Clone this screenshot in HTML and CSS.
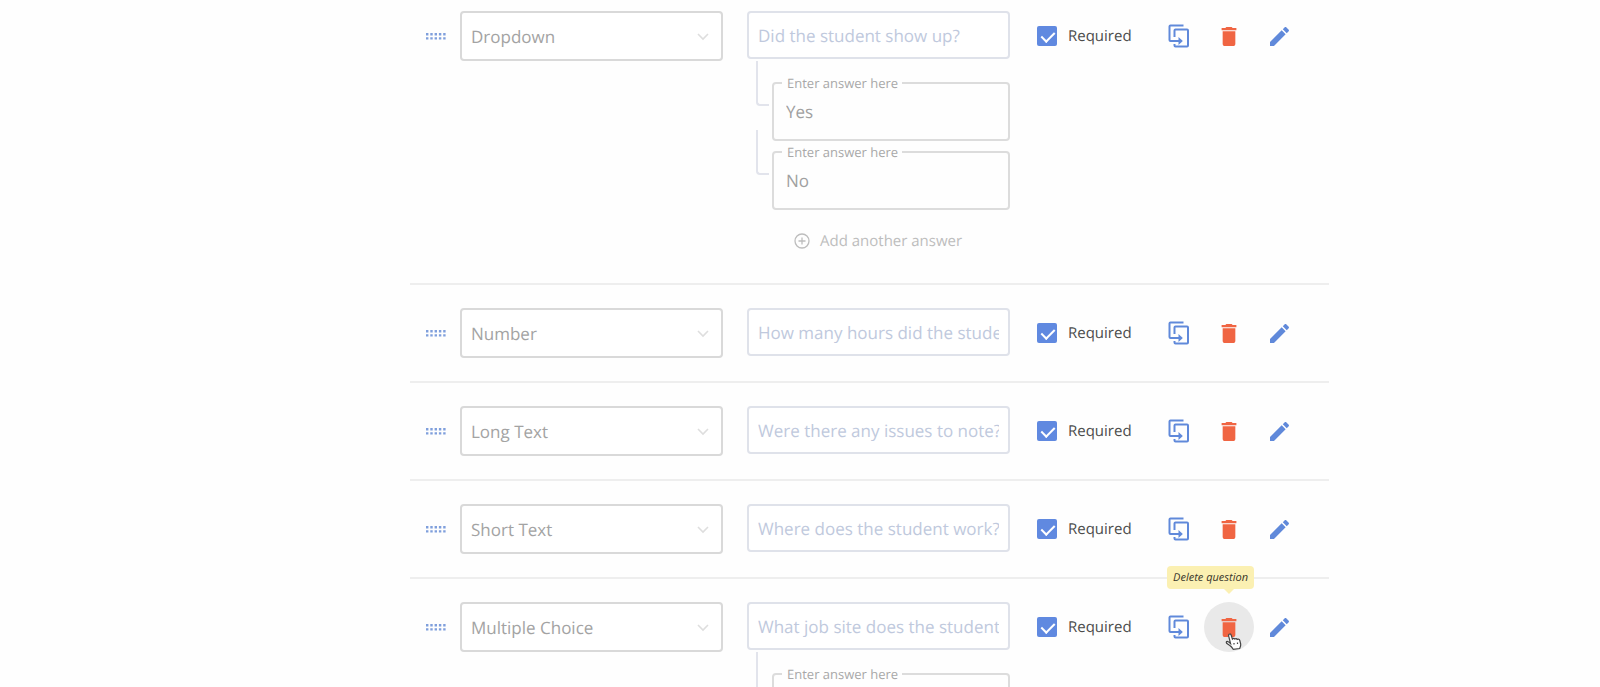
FILE: index.html
```html
<!DOCTYPE html>
<html lang="en">
<head>
    <meta charset="UTF-8">
    <meta name="viewport" content="width=device-width, initial-scale=1.0">
    <title>Form Questions</title>
    <link rel="stylesheet" href="styles.css">
</head>
<body>
    <!-- Shared icons -->
    <svg class="icon-defs" aria-hidden="true">
        <symbol id="icon-drag" viewBox="0 0 20 8">
            <path d="M0 1h2.400v2.400H0zM4.300 1h2.400v2.400H4.300zM8.600 1h2.400v2.400H8.600zM12.900 1h2.400v2.400h-2.400zM17.200 1h2.400v2.400h-2.400zM0 5.200h2.400v2.400H0zM4.300 5.200h2.400v2.400H4.300zM8.600 5.200h2.400v2.400H8.600zM12.900 5.200h2.400v2.400h-2.400zM17.200 5.200h2.400v2.400h-2.400z"/>
        </symbol>
        <symbol id="icon-chevron" viewBox="0 0 12 8">
            <path d="M1 1l5 5 5-5" fill="none" stroke="currentColor" stroke-width="1.6"/>
        </symbol>
        <symbol id="icon-copy" viewBox="0 0 22 24">
            <path d="M15.500 1.500H2.500Q1.500 1.500 1.500 2.500V16Q1.500 17 2.500 17H13M6.500 13V6.500Q6.500 5.500 7.500 5.500H19Q20 5.500 20 6.500V21.500Q20 22.500 19 22.500H7.500Q6.500 22.500 6.500 21.500V20" fill="none" stroke="currentColor" stroke-width="2"/>
            <path d="M10.500 13l4.300 4-4.300 4z"/>
        </symbol>
        <symbol id="icon-trash" viewBox="5 3 14 18">
            <path d="M6 19c0 1.100.9 2 2 2h8c1.100 0 2-.9 2-2V7H6v12zM19 4h-3.500l-1-1h-5l-1 1H5v2h14V4z"/>
        </symbol>
        <symbol id="icon-pencil" viewBox="3 3 18 18">
            <path d="M3 17.250V21h3.750L17.810 9.940l-3.750-3.750L3 17.250zM20.710 7.040c.39-.39.39-1.020 0-1.410l-2.340-2.340c-.39-.39-1.020-.39-1.410 0l-1.830 1.830 3.750 3.750 1.830-1.830z"/>
        </symbol>
        <symbol id="icon-plus" viewBox="0 0 16 16">
            <path d="M8 4.500v7M4.500 8h7" fill="none" stroke="currentColor" stroke-width="1.300"/>
            <circle cx="8" cy="8" r="7" fill="none" stroke="currentColor" stroke-width="1.300"/>
        </symbol>
    </svg>

    <main class="question-list">
        <section class="question">
            <span class="drag-handle"><svg><use href="#icon-drag"/></svg></span>
            <div class="type-field">
                <select class="type-select" aria-label="Question type">
                    <option>Dropdown</option>
                </select>
                <svg class="chevron"><use href="#icon-chevron"/></svg>
            </div>
            <div class="question-body">
                <input type="text" class="question-input" aria-label="Question" placeholder="Did the student show up?">
                <div class="answers">
                    <div class="answer">
                        <span class="connector"></span>
                        <fieldset class="answer-box">
                            <legend><label for="answer1">Enter answer here</label></legend>
                            <input type="text" id="answer1" value="Yes">
                        </fieldset>
                    </div>
                    <div class="answer">
                        <span class="connector"></span>
                        <fieldset class="answer-box">
                            <legend><label for="answer2">Enter answer here</label></legend>
                            <input type="text" id="answer2" value="No">
                        </fieldset>
                    </div>
                </div>
                <button type="button" class="add-answer"><svg><use href="#icon-plus"/></svg>Add another answer</button>
            </div>
            <div class="controls">
                <label class="required"><input type="checkbox" checked>Required</label>
                <div class="actions">
                    <button type="button" class="icon-btn" aria-label="Duplicate question"><svg class="copy"><use href="#icon-copy"/></svg></button>
                    <button type="button" class="icon-btn delete" aria-label="Delete question"><svg class="trash"><use href="#icon-trash"/></svg></button>
                    <button type="button" class="icon-btn" aria-label="Edit question"><svg class="pencil"><use href="#icon-pencil"/></svg></button>
                </div>
            </div>
        </section>

        <section class="question">
            <span class="drag-handle"><svg><use href="#icon-drag"/></svg></span>
            <div class="type-field">
                <select class="type-select" aria-label="Question type">
                    <option>Number</option>
                </select>
                <svg class="chevron"><use href="#icon-chevron"/></svg>
            </div>
            <div class="question-body">
                <input type="text" class="question-input" aria-label="Question" placeholder="How many hours did the student work?">
            </div>
            <div class="controls">
                <label class="required"><input type="checkbox" checked>Required</label>
                <div class="actions">
                    <button type="button" class="icon-btn" aria-label="Duplicate question"><svg class="copy"><use href="#icon-copy"/></svg></button>
                    <button type="button" class="icon-btn delete" aria-label="Delete question"><svg class="trash"><use href="#icon-trash"/></svg></button>
                    <button type="button" class="icon-btn" aria-label="Edit question"><svg class="pencil"><use href="#icon-pencil"/></svg></button>
                </div>
            </div>
        </section>

        <section class="question">
            <span class="drag-handle"><svg><use href="#icon-drag"/></svg></span>
            <div class="type-field">
                <select class="type-select" aria-label="Question type">
                    <option>Long Text</option>
                </select>
                <svg class="chevron"><use href="#icon-chevron"/></svg>
            </div>
            <div class="question-body">
                <input type="text" class="question-input" aria-label="Question" placeholder="Were there any issues to note?">
            </div>
            <div class="controls">
                <label class="required"><input type="checkbox" checked>Required</label>
                <div class="actions">
                    <button type="button" class="icon-btn" aria-label="Duplicate question"><svg class="copy"><use href="#icon-copy"/></svg></button>
                    <button type="button" class="icon-btn delete" aria-label="Delete question"><svg class="trash"><use href="#icon-trash"/></svg></button>
                    <button type="button" class="icon-btn" aria-label="Edit question"><svg class="pencil"><use href="#icon-pencil"/></svg></button>
                </div>
            </div>
        </section>

        <section class="question">
            <span class="drag-handle"><svg><use href="#icon-drag"/></svg></span>
            <div class="type-field">
                <select class="type-select" aria-label="Question type">
                    <option>Short Text</option>
                </select>
                <svg class="chevron"><use href="#icon-chevron"/></svg>
            </div>
            <div class="question-body">
                <input type="text" class="question-input" aria-label="Question" placeholder="Where does the student work?">
            </div>
            <div class="controls">
                <label class="required"><input type="checkbox" checked>Required</label>
                <div class="actions">
                    <button type="button" class="icon-btn" aria-label="Duplicate question"><svg class="copy"><use href="#icon-copy"/></svg></button>
                    <button type="button" class="icon-btn delete" aria-label="Delete question"><svg class="trash"><use href="#icon-trash"/></svg></button>
                    <button type="button" class="icon-btn" aria-label="Edit question"><svg class="pencil"><use href="#icon-pencil"/></svg></button>
                </div>
            </div>
        </section>

        <section class="question">
            <span class="drag-handle"><svg><use href="#icon-drag"/></svg></span>
            <div class="type-field">
                <select class="type-select" aria-label="Question type">
                    <option>Multiple Choice</option>
                </select>
                <svg class="chevron"><use href="#icon-chevron"/></svg>
            </div>
            <div class="question-body">
                <input type="text" class="question-input" aria-label="Question" placeholder="What job site does the student work at?">
                <div class="answers">
                    <div class="answer">
                        <span class="connector"></span>
                        <fieldset class="answer-box">
                            <legend><label for="answer3">Enter answer here</label></legend>
                            <input type="text" id="answer3">
                        </fieldset>
                    </div>
                </div>
            </div>
            <div class="controls">
                <label class="required"><input type="checkbox" checked>Required</label>
                <div class="actions">
                    <button type="button" class="icon-btn" aria-label="Duplicate question"><svg class="copy"><use href="#icon-copy"/></svg></button>
                    <button type="button" class="icon-btn delete active" aria-describedby="deleteTip" aria-label="Delete question">
                        <svg class="trash"><use href="#icon-trash"/></svg>
                        <span class="tooltip" id="deleteTip" role="tooltip">Delete question</span>
                        <svg class="pointer" viewBox="0 0 17 17">
                            <path d="M5.500 10.500L3.700 3.200Q3.300 1.200 4.700 1Q5.800.8 6.300 2.500L7.400 6Q8.500 4.800 9.800 6Q11.200 5 12.200 6.400Q14.200 5.600 14.800 7.500L15.700 11Q16 12.800 14.700 15.500L8.200 16.300Q6.800 13.800 4.500 12.300L1.600 10.300Q.7 8.700 2.300 8.400Q3.600 8.500 5.500 10.500z"/>
                            <path d="M9 10v1.500M12.500 9.500v1.500" fill="none"/>
                        </svg>
                    </button>
                    <button type="button" class="icon-btn" aria-label="Edit question"><svg class="pencil"><use href="#icon-pencil"/></svg></button>
                </div>
            </div>
        </section>
    </main>
</body>
</html>
```
FILE: styles.css
```css
* {
    box-sizing: border-box;
}

body {
    margin: 0;
    height: 100vh;
    overflow: hidden;
    background: #fefefe;
    font-family: "Open Sans", "Noto Sans", sans-serif;
    text-rendering: geometricPrecision;
    color: #4c4c4c;
}

input,
select,
button {
    font-family: inherit;
    text-rendering: inherit;
}

svg {
    display: block;
    fill: currentColor;
}

.icon-defs {
    display: none;
}

.question-list {
    padding: 11px 271px 0 410px;
}

.question {
    display: grid;
    grid-template-columns: 26px 1fr 1fr 295px;
    column-gap: 24px;
    align-items: start;
    padding-bottom: 23px;
    border-bottom: 2px solid #eee;
}

.question + .question {
    padding-top: 23px;
}

.question:last-child {
    border-bottom: none;
}

.drag-handle {
    display: flex;
    align-items: center;
    justify-content: flex-end;
    height: 50px;
    color: #7f9fdc;
}

.drag-handle svg {
    flex: none;
    width: 20px;
    height: 8px;
    margin-right: -10px;
}

.type-field {
    position: relative;
}

.type-select {
    display: block;
    width: 100%;
    height: 50px;
    padding: 0 9px;
    border: 2px solid #d9d9d9;
    border-radius: 4px;
    background: #fff;
    color: #a3a3a3;
    font-size: 17px;
    appearance: none;
}

.chevron {
    position: absolute;
    top: 22px;
    right: 14px;
    width: 12px;
    height: 8px;
    color: #dedede;
    pointer-events: none;
}

.question-input {
    display: block;
    width: 100%;
    height: 48px;
    padding: 0 9px;
    border: 2px solid #dfe2ea;
    border-radius: 4px;
    background: #fff;
    font-size: 17px;
}

.question-input::placeholder {
    color: #c0c9dd;
}

.answers {
    display: flex;
    flex-direction: column;
    gap: 4px;
    padding: 17px 0 0 9px;
}

.answer {
    display: flex;
    gap: 3px;
}

.connector {
    width: 13px;
    height: 45px;
    margin-top: -15px;
    border: solid #e2e4ec;
    border-width: 0 0 2px 2px;
    border-bottom-left-radius: 4px;
}

.answer-box {
    flex: 1;
    min-width: 0;
    height: 65px;
    margin: 0;
    padding: 0;
    border: 2px solid #dcdcdc;
    border-radius: 4px;
}

.answer-box legend {
    margin-left: 8px;
    padding: 0 4px 0 5px;
    color: #a8a8a8;
    font-size: 13px;
    line-height: 14px;
}

.answer-box label {
    display: block;
}

.answer-box input {
    display: block;
    width: 100%;
    height: 42px;
    padding: 0 12px;
    border: none;
    background: none;
    color: #a0a0a0;
    font-size: 17px;
}

.add-answer {
    display: flex;
    align-items: center;
    gap: 10px;
    height: 38px;
    margin: 12px 0 0 47px;
    padding: 0;
    border: none;
    background: none;
    color: #bdbdbd;
    font-size: 15px;
}

.add-answer svg {
    width: 16px;
    height: 16px;
}

.controls {
    display: flex;
    align-items: center;
    justify-content: space-between;
    height: 50px;
    padding: 0 25px 0 3px;
}

.required {
    display: flex;
    align-items: center;
    gap: 11px;
    font-size: 15px;
}

.required input {
    position: relative;
    width: 20px;
    height: 20px;
    margin: 0;
    border-radius: 2px;
    background: #6089e0;
    appearance: none;
}

.required input:checked::after {
    content: "";
    position: absolute;
    top: 3px;
    left: 7px;
    width: 6px;
    height: 11px;
    border: solid #fff;
    border-width: 0 2px 2px 0;
    transform: rotate(45deg);
}

.actions {
    display: flex;
}

.icon-btn {
    position: relative;
    display: flex;
    align-items: center;
    justify-content: center;
    width: 50px;
    height: 50px;
    padding: 0;
    border: none;
    border-radius: 50%;
    background: none;
    color: #6089da;
    cursor: pointer;
}

.icon-btn.delete {
    color: #f06543;
}

.icon-btn.active {
    background: #e9e9e9;
}

.copy {
    width: 22px;
    height: 24px;
}

.trash {
    width: 16px;
    height: 19px;
}

.pencil {
    width: 19px;
    height: 19px;
}

.tooltip {
    position: absolute;
    right: 0;
    bottom: 63px;
    padding: 0 6px;
    border-radius: 4px;
    background: #fbf0b2;
    color: #38352a;
    font-size: 11px;
    font-style: italic;
    line-height: 23px;
    white-space: nowrap;
}

.tooltip::after {
    content: "";
    position: absolute;
    top: 100%;
    right: 20px;
    border: 5px solid transparent;
    border-top-color: #fbf0b2;
}

.pointer {
    position: absolute;
    top: 31px;
    left: 21px;
    width: 17px;
    height: 17px;
    fill: #fff;
    stroke: #444;
    stroke-width: 1.2;
}
```
